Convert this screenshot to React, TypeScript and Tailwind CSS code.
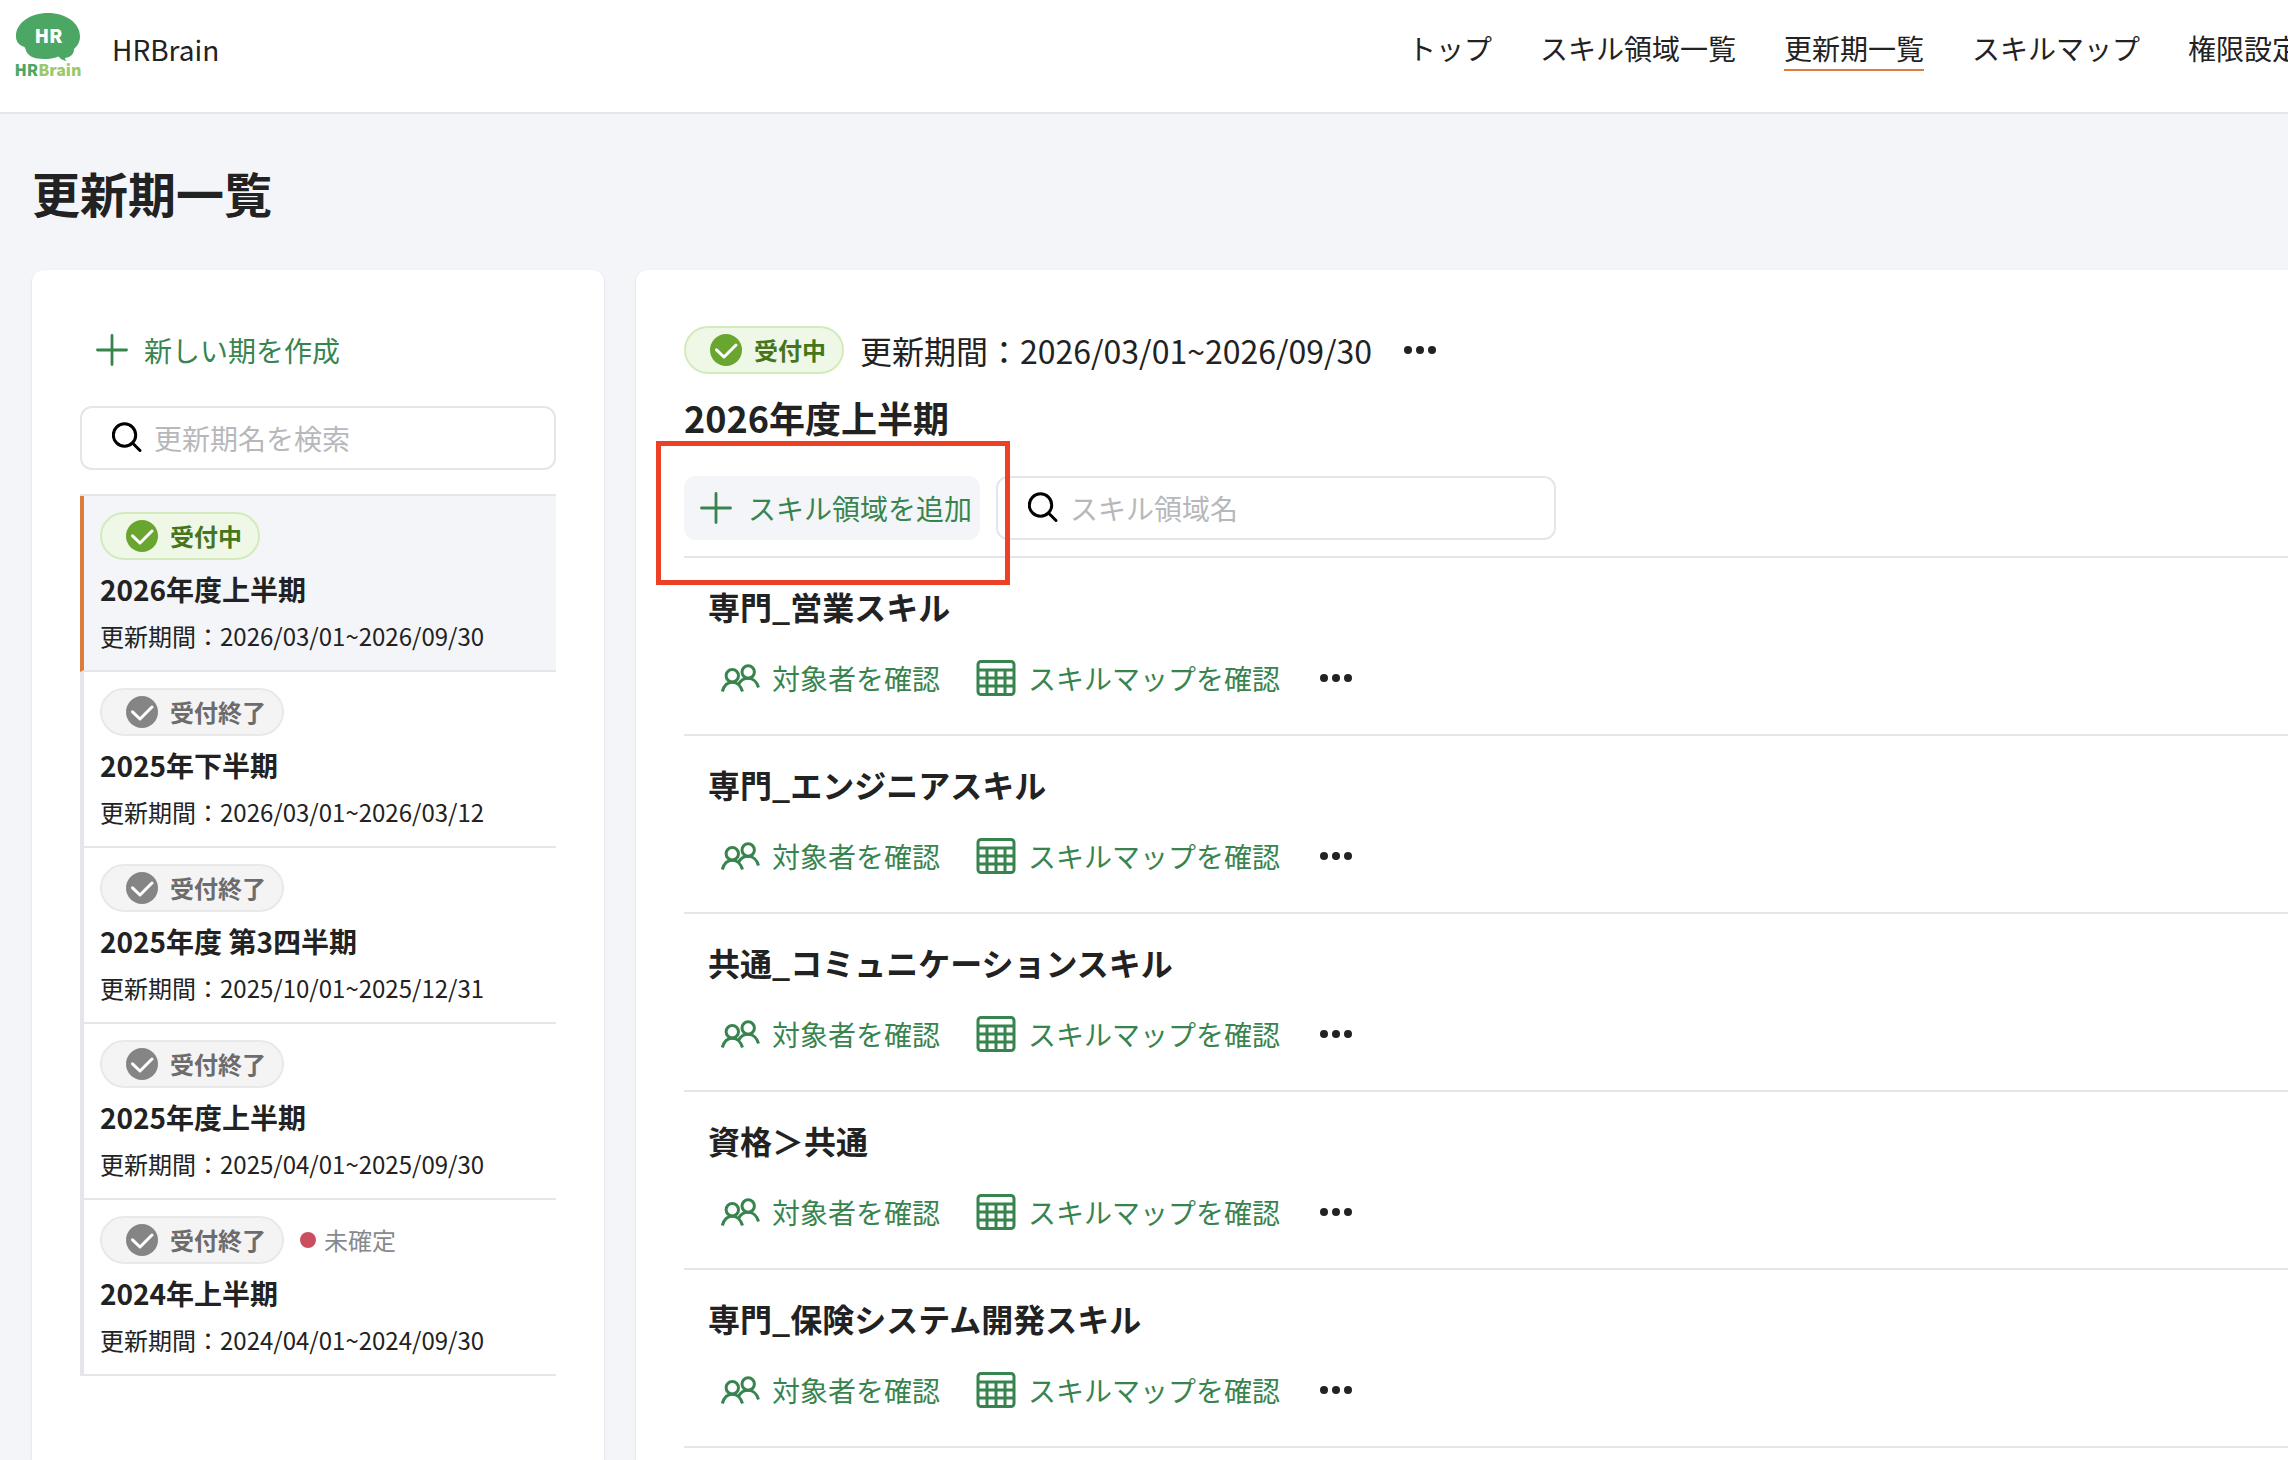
import clsx from "clsx";

type Period = {
    name: string
    range: string
    open?: boolean
    unconfirmed?: boolean
}

const navItems = ["トップ", "スキル領域一覧", "更新期一覧", "スキルマップ", "権限設定"];

const periods: Period[] = [
    { name: "2026年度上半期", range: "2026/03/01~2026/09/30", open: true },
    { name: "2025年下半期", range: "2026/03/01~2026/03/12" },
    { name: "2025年度 第3四半期", range: "2025/10/01~2025/12/31" },
    { name: "2025年度上半期", range: "2025/04/01~2025/09/30" },
    { name: "2024年上半期", range: "2024/04/01~2024/09/30", unconfirmed: true },
];

const skillAreas = [
    "専門_営業スキル",
    "専門_エンジニアスキル",
    "共通_コミュニケーションスキル",
    "資格＞共通",
    "専門_保険システム開発スキル",
];

function Logo() {
    return (
        <svg className="size-24 shrink-0" viewBox="0 0 96 96" role="img" aria-label="HRBrain">
            <path
                fill="#4ca765"
                d="M48 13C66 13 80 23 80 36.500C80 42 77.500 46 74 49C74 54 71 57 65 58C65 59.500 66 60.500 67 61C63 60.500 60.500 59 58.500 56.500C54 58.500 49 59 44 59C34 59 27 56 25.500 49C25 47 24 46.500 22 46C18 44 16 41 16 36C16 23 30 13 48 13Z"
            />
            <text x="48.500" y="43" textAnchor="middle" fontSize="19" fontWeight="900" fill="#fff">HR</text>
            <text x="48" y="76" textAnchor="middle" fontSize="16" fontWeight="900" fill="#4ca765">
                HR<tspan fill="#9cc869">Brain</tspan>
            </text>
        </svg>
    )
}

function PlusIcon() {
    return (
        <svg className="size-8 shrink-0" viewBox="0 0 32 32" fill="none" stroke="currentColor" strokeWidth="2.800" strokeLinecap="round" aria-hidden="true">
            <path d="M16 1.500v29M1.500 16h29" />
        </svg>
    )
}

function SearchIcon() {
    return (
        <svg className="size-8 shrink-0 text-black" viewBox="0 0 32 32" fill="none" stroke="currentColor" strokeWidth="3" strokeLinecap="round" aria-hidden="true">
            <circle cx="12.500" cy="13" r="11.200" />
            <path d="M20.500 21l7.500 7.500" />
        </svg>
    )
}

function PeopleIcon() {
    return (
        <svg className="size-10 shrink-0" viewBox="0 0 40 40" fill="none" stroke="currentColor" strokeWidth="3" aria-hidden="true">
            <circle cx="12.300" cy="17.800" r="6.200" />
            <circle cx="28.200" cy="14" r="6.200" />
            <path d="M2.300 33.500C3.800 28 7.500 24.200 12.300 24.200S21 28 22.500 33.500" />
            <path d="M18.500 26.500C20.500 22.500 24 20.300 28.200 20.300C33 20.300 37 24 38.500 29.500" />
        </svg>
    )
}

function TableIcon() {
    return (
        <svg className="size-10 shrink-0" viewBox="0 0 40 40" fill="none" stroke="currentColor" strokeWidth="3" aria-hidden="true">
            <rect x="2" y="3.500" width="36" height="33" rx="3" />
            <path d="M2 12h36M2 20h36M2 28h36M11 12v24M20 12v24M29 12v24" />
        </svg>
    )
}

function MoreButton({ label }: { label: string }) {
    return (
        <button type="button" aria-label={label} className="flex h-16 w-16 items-center justify-center">
            <svg className="size-9" viewBox="0 0 36 36" fill="currentColor" aria-hidden="true">
                <circle cx="6" cy="18" r="4" />
                <circle cx="18" cy="18" r="4" />
                <circle cx="30" cy="18" r="4" />
            </svg>
        </button>
    )
}

function StatusBadge({ open }: { open?: boolean }) {
    return (
        <span
            className={clsx(
                "flex h-12 shrink-0 items-center gap-3 rounded-full border-2 pl-6 pr-4 text-2xl font-bold",
                open ? "border-[#d3ebbc] bg-[#eff8e6] text-[#46751b]" : "border-[#e9e9e9] bg-[#f4f4f4] text-[#6c6c6c]"
            )}
        >
            <svg className="size-8" viewBox="0 0 32 32" aria-hidden="true">
                <circle cx="16" cy="16" r="16" fill={open ? "#69a630" : "#858585"} />
                <path d="M6.500 15.800l7.500 7.200L26 11" fill="none" stroke="#fff" strokeWidth="3" strokeLinecap="round" strokeLinejoin="round" />
            </svg>
            {open ? "受付中" : "受付終了"}
        </span>
    )
}

function SearchBox({ placeholder, className }: { placeholder: string, className?: string }) {
    return (
        <label className={clsx("flex h-16 items-center gap-2.5 rounded-xl border-2 border-[#e5e6eb] bg-white pl-[30px] pr-4", className)}>
            <SearchIcon />
            <input
                type="search"
                aria-label={placeholder}
                placeholder={placeholder}
                className="h-full min-w-0 flex-1 text-[28px] outline-none placeholder:text-[#b7b8bc]"
            />
        </label>
    )
}

function PeriodItem({ period }: { period: Period }) {
    return (
        <li
            className={clsx(
                "flex flex-col items-start gap-2 border-b-2 border-l-4 border-b-[#e5e6eb] py-4 pl-4",
                period.open ? "border-l-[#d97c3c] bg-[#f4f5f9]" : "border-l-[#e5e6eb]"
            )}
        >
            <div className="flex items-center gap-4">
                <StatusBadge open={period.open} />
                {period.unconfirmed && (
                    <span className="flex items-center gap-2 text-2xl text-[#88898d]">
                        <span className="size-4 rounded-full bg-[#c94f60]" />
                        未確定
                    </span>
                )}
            </div>
            <h2 className="text-[28px] leading-[42px] font-bold">{period.name}</h2>
            <p className="text-2xl leading-9">更新期間：{period.range}</p>
        </li>
    )
}

function SkillAreaRow({ name }: { name: string }) {
    return (
        <li className="border-b-2 border-[#e5e6eb] py-6 pl-6">
            <h3 className="text-[32px] leading-[48px] font-bold">{name}</h3>
            <div className="mt-4 flex items-center gap-3">
                <button type="button" className="flex h-16 items-center gap-3 px-3 text-[28px] text-[#38844e]">
                    <PeopleIcon />
                    対象者を確認
                </button>
                <button type="button" className="flex h-16 items-center gap-3 px-3 text-[28px] text-[#38844e]">
                    <TableIcon />
                    スキルマップを確認
                </button>
                <MoreButton label={`${name}のメニュー`} />
            </div>
        </li>
    )
}

export default function App() {
    return (
        <div className="flex h-screen flex-col overflow-hidden bg-[#f4f5f9] font-['Noto_Sans_CJK_JP',sans-serif] text-[#222222]">

            <header className="flex shrink-0 items-start border-b-2 border-[#e5e6eb] bg-white pb-4 whitespace-nowrap">
                <Logo />
                <span className="ml-4 flex h-[98px] -mb-1 items-center text-[28px]">HRBrain</span>
                <nav className="ml-auto -mr-3 flex h-[98px] -mb-1 items-center gap-12 text-[28px]">
                    {navItems.map((item) => (
                        <a
                            key={item}
                            href="#"
                            aria-current={item === "更新期一覧" ? "page" : undefined}
                            className={clsx("border-b-2 leading-[42px]", item === "更新期一覧" ? "border-[#d97c3c]" : "border-transparent")}
                        >
                            {item}
                        </a>
                    ))}
                </nav>
            </header>

            <h1 className="flex h-[156px] shrink-0 items-center pl-8 text-5xl font-bold">更新期一覧</h1>

            <main className="flex min-h-0 flex-1 gap-8 pl-8">

                <aside className="w-[572px] shrink-0 rounded-t-xl bg-white p-12 shadow-sm">
                    <button type="button" className="flex h-16 items-center gap-4 px-4 text-[28px] text-[#38844e]">
                        <PlusIcon />
                        新しい期を作成
                    </button>
                    <SearchBox placeholder="更新期名を検索" className="mt-6" />
                    <ul className="mt-6 border-t-2 border-[#e5e6eb]">
                        {periods.map((period) => (
                            <PeriodItem key={period.name} period={period} />
                        ))}
                    </ul>
                </aside>

                <section className="min-w-0 flex-1 rounded-tl-xl bg-white pt-12 pl-12 shadow-sm">
                    <div className="flex items-center gap-4">
                        <StatusBadge open />
                        <p className="text-[32px]">更新期間：2026/03/01~2026/09/30</p>
                        <MoreButton label="更新期のメニュー" />
                    </div>
                    <h2 className="mt-2 text-4xl leading-[54px] font-bold">2026年度上半期</h2>

                    <div className="mt-8 flex gap-4 border-b-2 border-[#e5e6eb] pb-4">
                        <div className="relative">
                            <button type="button" className="flex h-16 items-center gap-4 rounded-xl bg-[#f4f5f9] pl-4 pr-2 text-[28px] text-[#38844e]">
                                <PlusIcon />
                                スキル領域を追加
                            </button>
                            {/* highlight frame around the add button */}
                            <div className="pointer-events-none absolute -top-[35px] -right-[30px] -bottom-[45px] -left-7 z-10 border-5 border-[#ed4125]" />
                        </div>
                        <SearchBox placeholder="スキル領域名" className="w-[560px]" />
                    </div>

                    <ul>
                        {skillAreas.map((name) => (
                            <SkillAreaRow key={name} name={name} />
                        ))}
                    </ul>
                </section>

            </main>
        </div>
    )
}
